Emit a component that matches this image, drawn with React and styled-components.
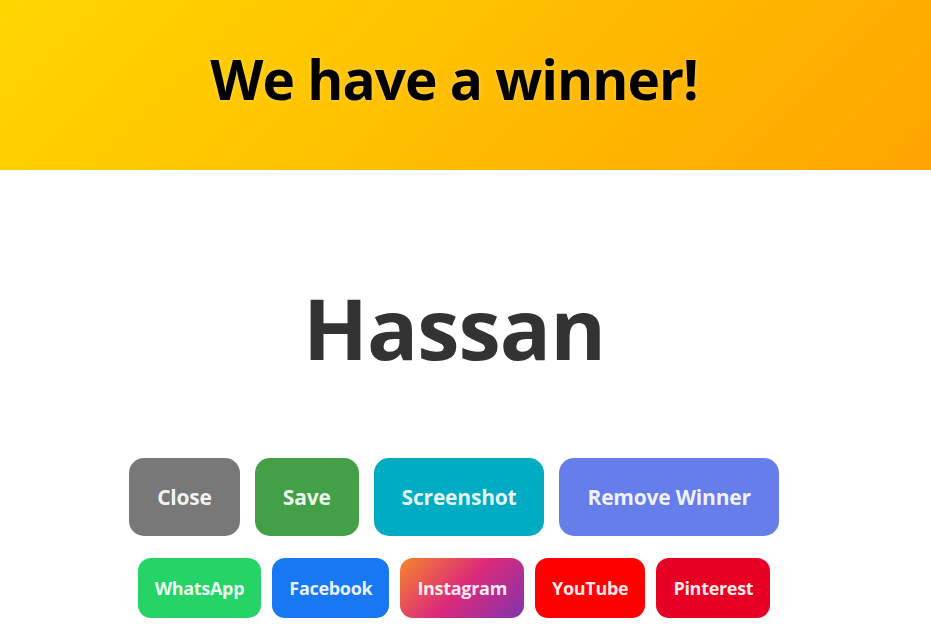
import React from "react";
import styled, { createGlobalStyle } from "styled-components";

const GlobalStyle = createGlobalStyle`
  html, body {
    margin: 0;
    padding: 0;
    background: #ffffff;
  }
  body {
    font-family: "Open Sans", "Noto Sans", "Liberation Sans", sans-serif;
  }
`;

const Modal = styled.div`
  width: 931px;
  height: 630px;
  background: #fff;
  overflow: hidden;
  display: flex;
  flex-direction: column;
`;

const Header = styled.header`
  height: 170px;
  background: linear-gradient(135deg, #ffd700 0%, #ffa500 100%);
  display: flex;
  align-items: center;
  justify-content: center;
  padding: 0 23px 14px 0;
  box-sizing: border-box;
`;

const Title = styled.h1`
  margin: 0;
  font-size: 55px;
  font-weight: 700;
  color: #000;
  letter-spacing: -1px;
  text-shadow: 0 0 5px rgba(255, 255, 255, 0.3);
`;

const Body = styled.main`
  display: flex;
  flex-direction: column;
  align-items: center;
  padding: 115px 23px 0 0;
`;

const WinnerName = styled.div`
  font-size: 85px;
  font-weight: 700;
  color: #333;
  line-height: 1;
  letter-spacing: -1px;
`;

const ButtonRow = styled.div`
  display: flex;
  justify-content: center;
  gap: ${(p) => p.$gap}px;
  margin-top: ${(p) => p.$top}px;
`;

const ActionButton = styled.button`
  border: none;
  border-radius: 15px;
  padding: 25px 28px;
  font-family: inherit;
  font-size: 21px;
  font-weight: 700;
  letter-spacing: -0.2px;
  color: rgba(255, 255, 255, 0.92);
  cursor: pointer;
  background: ${(p) => p.$bg};
`;

const ShareButton = styled.button`
  border: none;
  border-radius: 13px;
  padding: 18px 17px;
  font-family: inherit;
  font-size: 18px;
  font-weight: 700;
  letter-spacing: -0.3px;
  color: rgba(255, 255, 255, 0.92);
  cursor: pointer;
  background: ${(p) => p.$bg};
`;

const actions = [
  { label: "Close", bg: "#787878" },
  { label: "Save", bg: "#43a047" },
  { label: "Screenshot", bg: "#00acc1" },
  { label: "Remove Winner", bg: "#667eea" },
];

const shares = [
  { label: "WhatsApp", bg: "#25d366" },
  { label: "Facebook", bg: "#1877f2" },
  {
    label: "Instagram",
    bg: "linear-gradient(135deg, #f58529 0%, #dd2a7b 50%, #8134af 100%)",
  },
  { label: "YouTube", bg: "#ff0000" },
  { label: "Pinterest", bg: "#e60023" },
];

export default function App() {
  return (
    <>
      <GlobalStyle />
      <Modal>
        <Header>
          <Title>We have a winner!</Title>
        </Header>
        <Body>
          <WinnerName>Hassan</WinnerName>
          <ButtonRow $gap={15} $top={88}>
            {actions.map((a) => (
              <ActionButton key={a.label} $bg={a.bg}>
                {a.label}
              </ActionButton>
            ))}
          </ButtonRow>
          <ButtonRow $gap={11} $top={22}>
            {shares.map((s) => (
              <ShareButton key={s.label} $bg={s.bg}>
                {s.label}
              </ShareButton>
            ))}
          </ButtonRow>
        </Body>
      </Modal>
    </>
  );
}
